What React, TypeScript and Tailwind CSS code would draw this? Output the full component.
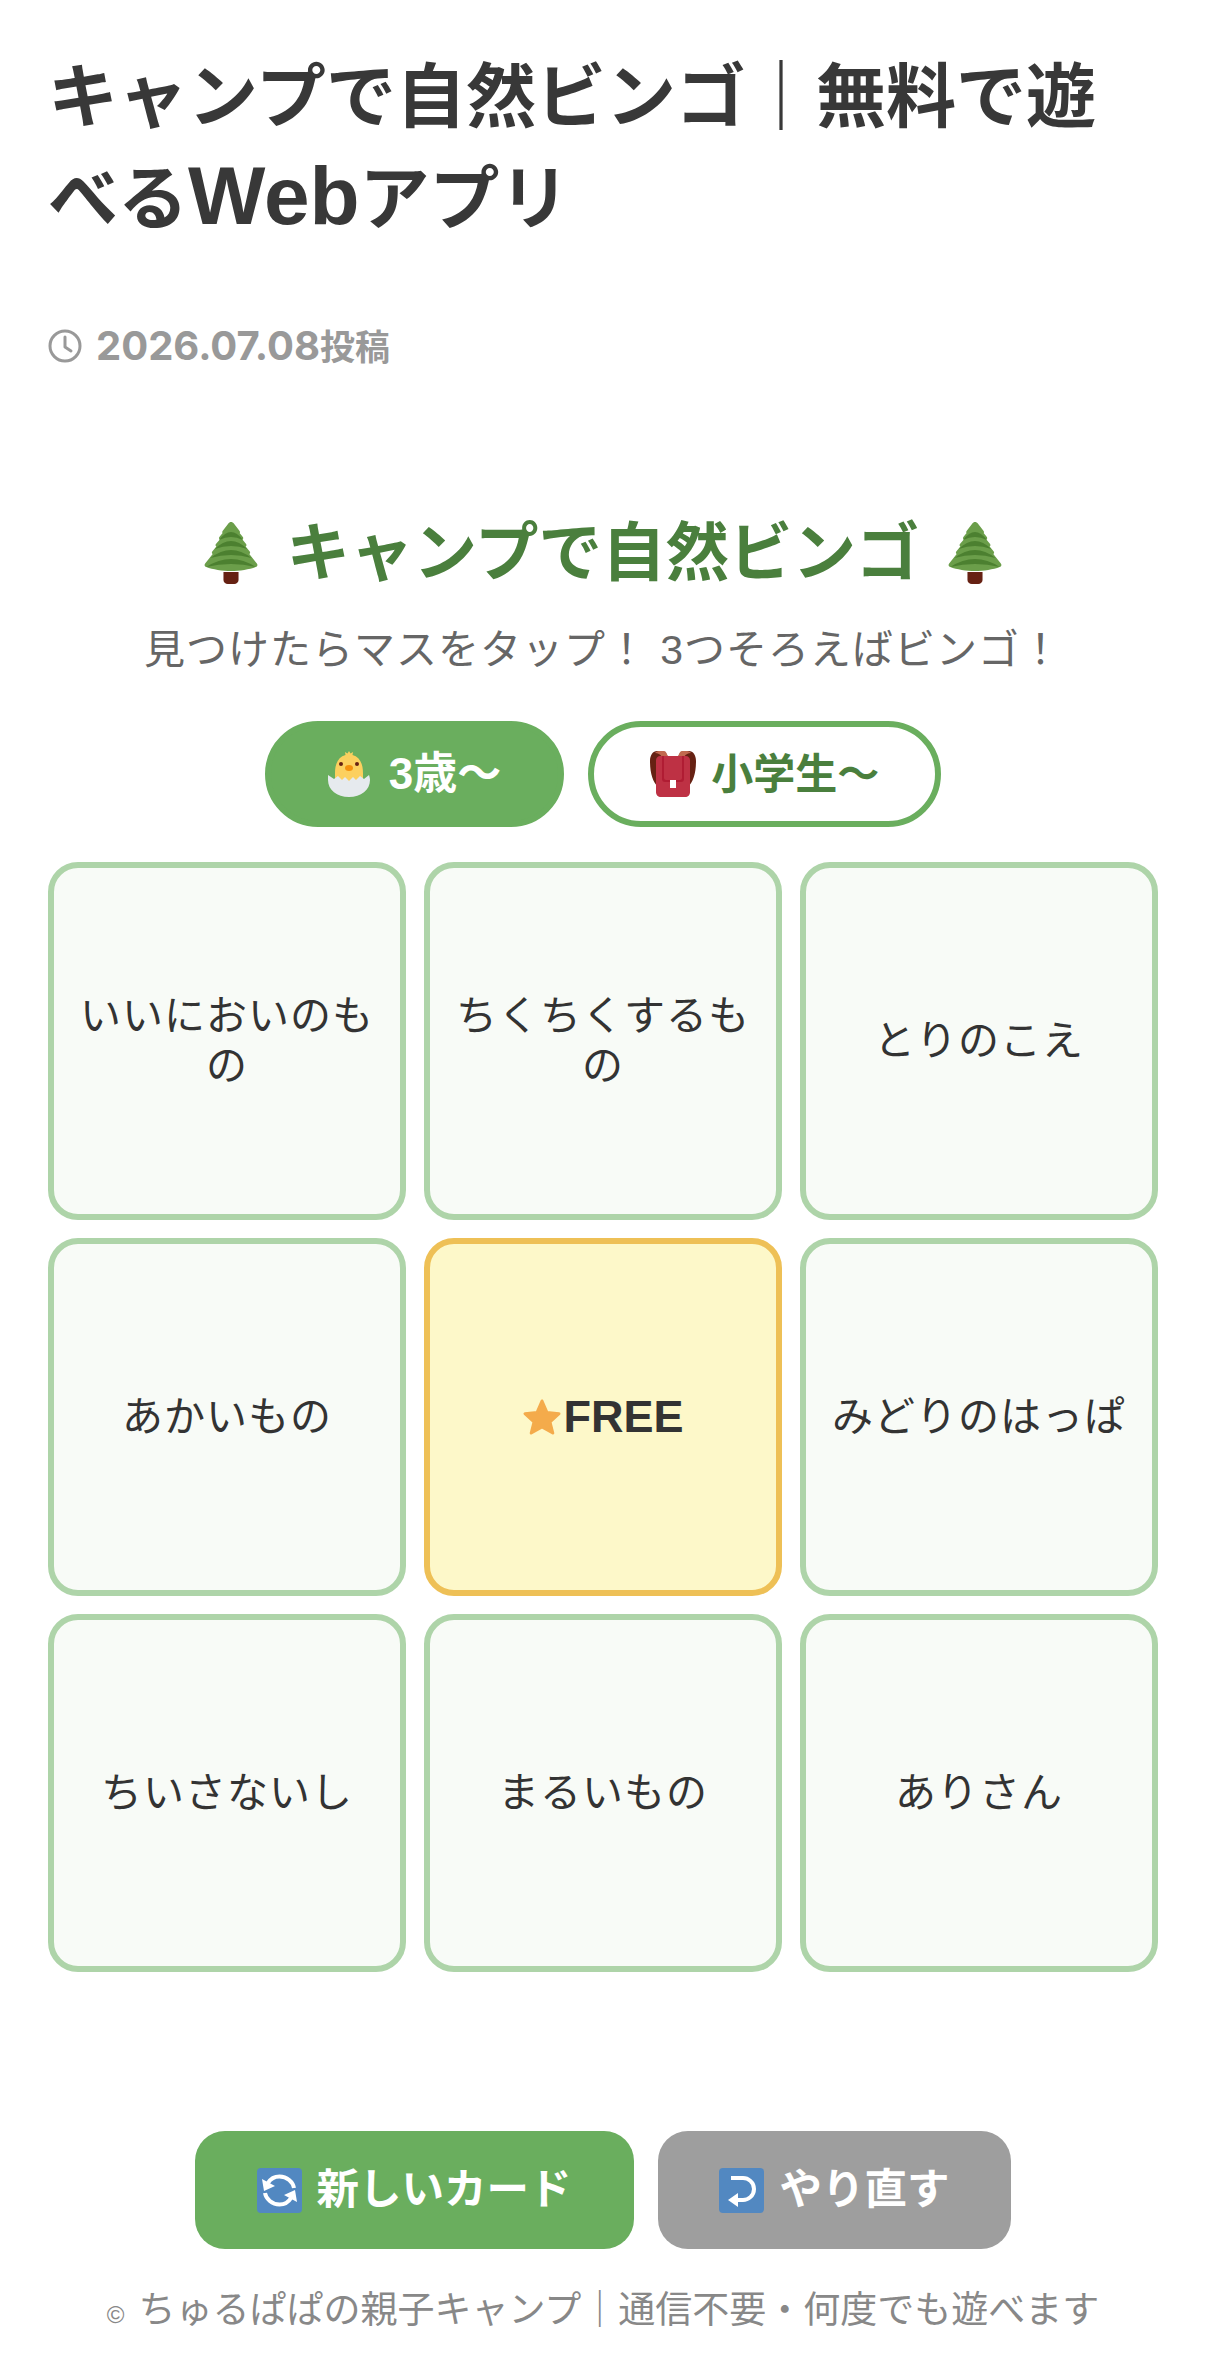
const FONT = "font-['Liberation_Sans','Noto_Sans_CJK_JP',sans-serif]"

const TreeIcon = () => (
  <svg width="56" height="62" viewBox="0 0 52 62" preserveAspectRatio="none" className="shrink-0">
    <path d="M19 50h14v8a4 4 0 0 1-4 4h-6a4 4 0 0 1-4-4z" fill="#662113" />
    <path d="M26 0c1 0 2 .6 3 2l5 7c.6 1 .4 2 0 2l3 4c.6 1 .4 2-.4 2.400l3.400 4.600c.6 1 .4 2-.4 2.400l3.800 5.100c.6 1 .4 2-.4 2.400l7 9.600c1 1.500.5 3-1 3.500-6 2.500-15 4-23 4s-17-1.500-23-4c-1.500-.5-2-2-1-3.500l7-9.600c-.8-.4-1-1.400-.4-2.400l3.800-5.100c-.8-.4-1-1.400-.4-2.400L15.600 17.400C14.800 17 14.600 16 15.200 15l3-4c-.4 0-.6-1 0-2l5-7c1-1.400 1.800-2 2.800-2z" fill="#6b9e4a" />
    <path d="M15 18Q26 2 37 18Q26 12 15 18z" fill="#4c8030" />
    <path d="M11 27Q26 11 41 27Q26 21 11 27z" fill="#4c8030" />
    <path d="M7 36Q26 20 45 36Q26 30 7 36z" fill="#4c8030" />
    <path d="M3 45Q26 29 49 45Q26 39 3 45z" fill="#4c8030" />
  </svg>
)

const ChickIcon = () => (
  <svg width="42" height="46" viewBox="0 0 42 46" className="shrink-0">
    <path d="M21 0l1.500 2.500L25 1l-.5 3C32 6 35 13 35 22v10H7V22C7 13 10 6 17.500 4L17 1l2.500 1.500z" fill="#fcd05f" />
    <circle cx="13" cy="13" r="2" fill="#662113" />
    <circle cx="29" cy="13" r="2" fill="#662113" />
    <ellipse cx="21" cy="17" rx="4" ry="3" fill="#f4900c" />
    <path d="M0 24l6 4 4-3 4 4 3-3 4 4 4-4 3 3 4-4 4 3 5-4c.5 2 1 3 1 5 0 10-9 17-21 17S0 39 0 29c0-2 0-3 0-5z" fill="#e6eaee" />
  </svg>
)

const BackpackIcon = () => (
  <svg width="46" height="46" viewBox="0 0 46 46" className="shrink-0">
    <path d="M0 10C0 4 3 0 7 0h5c3 0 5 3 6 6h-8L8 36c-5-5-8-13-8-26z" fill="#662113" />
    <path d="M46 10c0-6-3-10-7-10h-5c-3 0-5 3-6 6h8l2 30c5-5 8-13 8-26z" fill="#662113" />
    <path d="M5 2c1-1 2-2 4-2h5c2 0 3 3 4 6h-6c-2-3-4-4-7-4zM41 2c-1-1-2-2-4-2h-5c-2 0-3 3-4 6h6c2-3 4-4 7-4z" fill="#c1694f" />
    <path d="M6 9c0-2 2-4 4-4h26c2 0 4 2 4 4v32c0 3-2 5-5 5H11c-3 0-5-2-5-5z" fill="#be3144" />
    <path d="M12 5h22v23c0 2-1 3-3 3H15c-2 0-3-1-3-3z" fill="#a0041e" opacity=".45" />
    <path d="M14 5h18v22c0 1-1 2-2 2H16c-1 0-2-1-2-2z" fill="#be3144" />
    <rect x="20" y="29" width="6" height="8" fill="#fff" />
  </svg>
)

const StarIcon = () => (
  <svg width="40" height="38" viewBox="0 0 40 38" className="shrink-0">
    <path d="M20 3l5 11.500 12 1.200-9 8.300 2.800 11L20 29l-10.800 6L12 24l-9-8.300 12-1.200z" fill="#f4ab4b" stroke="#f4ab4b" strokeWidth="3" strokeLinejoin="round" />
  </svg>
)

const RefreshIcon = () => (
  <svg width="45" height="45" viewBox="0 0 45 45" className="shrink-0">
    <rect width="45" height="45" rx="4" fill="#5288c1" />
    <path d="M11 15c3-5 7-6.500 11.500-6.500C30 8.500 36 14 37 20" fill="none" stroke="#fff" strokeWidth="4" />
    <path d="M34 30c-3 5-7 6.500-11.500 6.500C15 36.500 9 31 8 25" fill="none" stroke="#fff" strokeWidth="4" />
    <path d="M5 11l13 7-11 5zM40 34l-13-7 11-5z" fill="#fff" />
  </svg>
)

const ReturnIcon = () => (
  <svg width="45" height="45" viewBox="0 0 45 45" className="shrink-0">
    <rect width="45" height="45" rx="4" fill="#5288c1" />
    <path d="M12 10h12c5 0 11 4 11 11s-6 11-11 11h-7" fill="none" stroke="#fff" strokeWidth="4" />
    <path d="M9 32l10-7v14z" fill="#fff" />
  </svg>
)

const ClockIcon = () => (
  <svg width="34" height="34" viewBox="0 0 34 34" fill="none" stroke="#999" strokeWidth="3" className="shrink-0">
    <circle cx="17" cy="17" r="15" />
    <path d="M17 8v10l6 4" strokeLinecap="round" strokeLinejoin="round" />
  </svg>
)

function Cell({ text }: { text: string }) {
  return (
    <div className="aspect-square rounded-[30px] border-[6px] border-[#aed4a9] bg-[#f8fbf7] flex items-center justify-center text-center px-[20px] text-[41px] tracking-[1px] leading-[50px] text-[#333]">
      {text}
    </div>
  )
}

export default function App() {
  return (
    <div className={`${FONT} w-[1206px] h-[2368px] bg-white overflow-hidden px-[48px]`}>
      <h1 className="pt-[47px] text-[70px] leading-[102px] font-bold text-[#383838]">
        キャンプで自然ビンゴ｜無料で遊べる<span className="text-[82px] leading-[70px]">Web</span>アプリ
      </h1>

      <div className="mt-[75px] flex items-center gap-[14px] h-[40px] text-[#999] font-bold">
        <ClockIcon />
        <span className="font-['Inter','Noto_Sans_CJK_JP',sans-serif] text-[40px] leading-none">2026.07.08<span className="text-[35px]">投稿</span></span>
      </div>

      <div className="mt-[150px] flex items-center justify-center gap-[27px]">
        <TreeIcon />
        <span className="text-[63.500px] leading-[74px] font-bold text-[#4a7f3d]">キャンプで自然ビンゴ</span>
        <TreeIcon />
      </div>

      <p className="mt-[32px] text-center text-[41px] leading-[56px] tracking-[1px] text-[#666]">
        見つけたらマスをタップ！ 3つそろえばビンゴ！
      </p>

      <div className="mt-[43px] flex justify-center gap-[24px]">
        <div className="h-[106px] rounded-full bg-[#6aae5e] border-[6px] border-[#6aae5e] px-[57px] flex items-center gap-[19px] text-[44px] font-bold text-white">
          <ChickIcon />
          <span>3歳〜</span>
        </div>
        <div className="h-[106px] rounded-full bg-white border-[6px] border-[#6aae5e] px-[56px] flex items-center gap-[15px] text-[42px] font-bold text-[#4a7f3d]">
          <BackpackIcon />
          <span>小学生〜</span>
        </div>
      </div>

      <div className="mt-[35px] grid grid-cols-3 gap-[18px]">
        <Cell text="いいにおいのもの" />
        <Cell text="ちくちくするもの" />
        <Cell text="とりのこえ" />
        <Cell text="あかいもの" />
        <div className="aspect-square rounded-[30px] border-[6px] border-[#eec056] bg-[#fdf8c9] flex items-center justify-center gap-[1px] text-[45px] font-bold text-[#333]">
          <StarIcon />
          <span>FREE</span>
        </div>
        <Cell text="みどりのはっぱ" />
        <Cell text="ちいさないし" />
        <Cell text="まるいもの" />
        <Cell text="ありさん" />
      </div>

      <div className="mt-[159px] flex justify-center gap-[24px]">
        <button className="h-[118px] rounded-[30px] bg-[#6aae5e] px-[62px] flex items-center gap-[14px] text-[42.500px] font-bold text-white">
          <RefreshIcon />
          <span>新しいカード</span>
        </button>
        <button className="h-[118px] rounded-[30px] bg-[#9e9e9e] px-[61px] flex items-center gap-[16px] text-[42.500px] font-bold text-white">
          <ReturnIcon />
          <span>やり直す</span>
        </button>
      </div>

      <p className="mt-[38px] text-center text-[37px] leading-[48px] text-[#888]">
        <span className="text-[24px] mr-[14px]">©</span>ちゅるぱぱの親子キャンプ｜通信不要・何度でも遊べます
      </p>
    </div>
  )
}
